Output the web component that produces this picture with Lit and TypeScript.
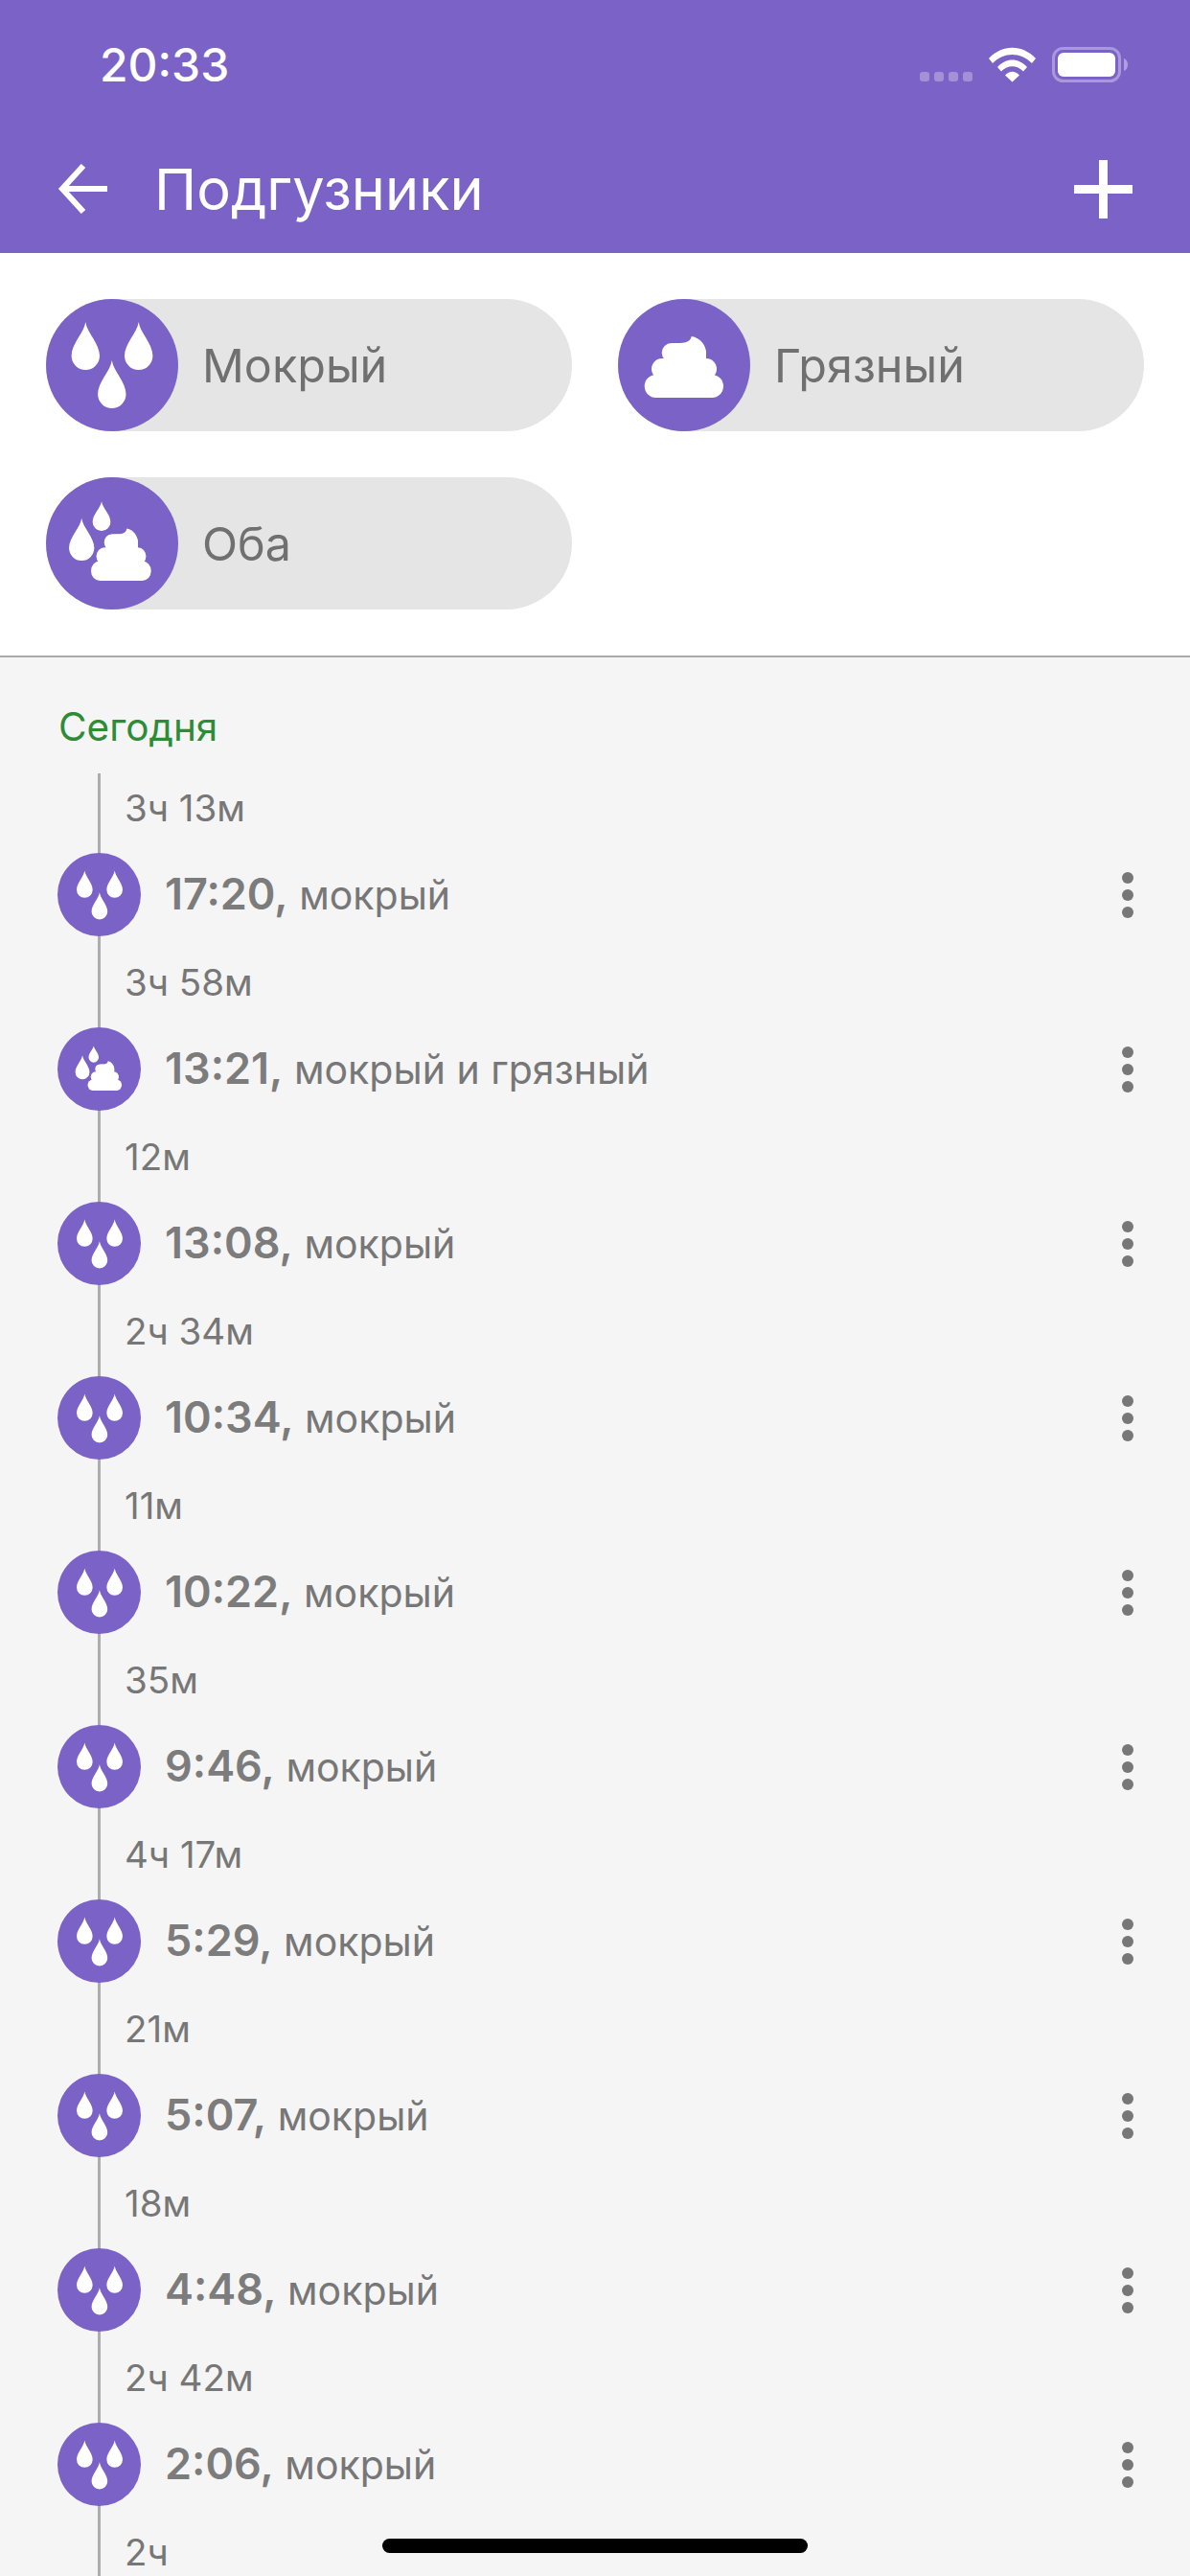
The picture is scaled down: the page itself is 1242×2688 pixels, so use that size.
import { LitElement, html, css, svg } from 'lit';
import { customElement } from 'lit/decorators.js';

type Kind = 'wet' | 'dirty' | 'both';

// teardrop: tip at (cx, tip), total size w x h
const drop = (cx: number, tip: number, w: number, h: number) => {
  const r = w / 2;
  const cy = tip + h - r;
  const d = `M${cx} ${tip}C${cx + r * 0.1} ${tip + h * 0.22} ${cx + r} ${cy - r * 0.85} ${cx + r} ${cy}` +
    `A${r} ${r} 0 0 1 ${cx - r} ${cy}C${cx - r} ${cy - r * 0.85} ${cx - r * 0.1} ${tip + h * 0.22} ${cx} ${tip}Z`;
  return svg`<path d=${d}></path>`;
};

const poop = svg`
  <rect x="27.7" y="79" width="82.3" height="24" rx="12"></rect>
  <rect x="35" y="62" width="68" height="22" rx="11"></rect>
  <rect x="45.7" y="46" width="46.3" height="20" rx="10"></rect>
  <path d="M56 46C68 46 75.500 46 76.700 39C86 40.500 92 48 92 57V64H56Z"></path>
`;

const glyphs: Record<Kind, unknown> = {
  wet: svg`${drop(41.3, 24, 29.4, 50)}${drop(96.7, 24, 29.4, 50)}${drop(68.8, 64, 29.4, 50)}`,
  dirty: poop,
  both: svg`${drop(37.200, 42.700, 26.300, 44.300)}${drop(58, 25.300, 18.700, 30.700)}
    <g transform="translate(25.900 20.450) scale(0.762 0.85)">${poop}</g>`,
};

const events: { gap: string; time: string; label: string; kind: Kind }[] = [
  { gap: '3ч 13м', time: '17:20', label: 'мокрый', kind: 'wet' },
  { gap: '3ч 58м', time: '13:21', label: 'мокрый и грязный', kind: 'both' },
  { gap: '12м', time: '13:08', label: 'мокрый', kind: 'wet' },
  { gap: '2ч 34м', time: '10:34', label: 'мокрый', kind: 'wet' },
  { gap: '11м', time: '10:22', label: 'мокрый', kind: 'wet' },
  { gap: '35м', time: '9:46', label: 'мокрый', kind: 'wet' },
  { gap: '4ч 17м', time: '5:29', label: 'мокрый', kind: 'wet' },
  { gap: '21м', time: '5:07', label: 'мокрый', kind: 'wet' },
  { gap: '18м', time: '4:48', label: 'мокрый', kind: 'wet' },
  { gap: '2ч 42м', time: '2:06', label: 'мокрый', kind: 'wet' },
];

@customElement('app-root')
export class AppRoot extends LitElement {
  static styles = css`
    :host {
      display: block;
      height: 2688px;
      overflow: hidden;
      position: relative;
      background: #f5f5f5;
      font-family: 'Inter', 'Liberation Sans', sans-serif;
    }

    .header {
      background: #7b62c6;
      color: #fff;
      height: 264px;
      box-sizing: border-box;
    }

    .status {
      height: 130px;
      display: flex;
      align-items: flex-start;
      padding: 44px 0 0 104px;
      box-sizing: border-box;
    }

    .clock {
      font-size: 48px;
      font-weight: 500;
      line-height: 48px;
      flex: 1;
    }

    .status svg {
      display: block;
      margin-right: 65px;
      margin-top: 5px;
    }

    .nav {
      height: 134px;
      display: flex;
      align-items: center;
      padding: 0 60px;
    }

    .nav h1 {
      flex: 1;
      margin: 0 0 0 49px;
      font-size: 59.500px;
      font-weight: 400;
      line-height: 70px;
    }

    .nav svg {
      display: block;
    }

    .chips {
      background: #fff;
      border-bottom: 2px solid #a9a9a9;
      padding: 48px;
      display: grid;
      grid-template-columns: 549px 549px;
      gap: 48px;
    }

    .chip {
      display: flex;
      align-items: center;
      gap: 25px;
      height: 138px;
      border-radius: 69px;
      background: #e5e5e5;
      color: #707070;
      font-size: 48.500px;
    }

    .badge {
      flex: none;
      border-radius: 50%;
      background: #7b62c6;
      display: flex;
      align-items: center;
      justify-content: center;
      position: relative;
    }

    .badge svg {
      display: block;
      fill: #fff;
    }

    .chip .badge {
      width: 138px;
      height: 138px;
    }

    .day {
      margin: 0;
      padding: 50px 0 0 61px;
      color: #2e8b37;
      font-size: 40.500px;
      font-weight: 400;
      line-height: 46px;
    }

    .timeline {
      position: relative;
      margin-top: 13px;
    }

    .timeline::before {
      content: '';
      position: absolute;
      top: 12px;
      bottom: 0;
      left: 102px;
      width: 3px;
      background: #adadad;
    }

    .gap {
      height: 95px;
      padding-left: 130px;
      display: flex;
      align-items: center;
      color: #777;
      font-size: 38.500px;
      position: relative;
    }

    .row {
      height: 87px;
      display: flex;
      align-items: center;
      padding: 0 59px 0 60px;
      color: #777;
      font-size: 41px;
      position: relative;
    }

    .row .badge {
      width: 87px;
      height: 87px;
      margin-right: 25px;
    }

    .row .text {
      flex: 1;
      padding-bottom: 3px;
    }

    .row b {
      color: #7c7c7c;
      font-size: 45px;
      font-weight: 600;
    }

    .dots {
      display: flex;
      flex-direction: column;
      gap: 6px;
    }

    .dots i {
      display: block;
      width: 12px;
      height: 12px;
      border-radius: 50%;
      background: #777;
    }

    .home {
      position: absolute;
      left: 399px;
      top: 2649px;
      width: 444px;
      height: 15px;
      border-radius: 8px;
      background: #000;
    }
  `;

  private icon(kind: Kind, size: number) {
    return html`<div class="badge">
      <svg width=${size} height=${size} viewBox="0 0 138 138">${glyphs[kind]}</svg>
    </div>`;
  }

  private statusIcons() {
    return html`<svg width="217" height="38" viewBox="960 49 217 38" fill="#fff">
      <g opacity="0.3">
        <rect x="960" y="75" width="10" height="10" rx="3"></rect>
        <rect x="975" y="75" width="10" height="10" rx="3"></rect>
        <rect x="990" y="75" width="10" height="10" rx="3"></rect>
        <rect x="1005" y="75" width="10" height="10" rx="3"></rect>
      </g>
      <path d="M1032 61C1046 46 1067 46 1081 61L1077 66C1065 54 1048 54 1036 66Z"></path>
      <path d="M1041 70C1050 60 1063 60 1072 70L1068 74.500C1061 67.500 1052 67.500 1045 74.500Z"></path>
      <path d="M1049 78.500C1054 73.500 1059 73.500 1064 78.500L1056.500 85.500Z"></path>
      <rect x="1099.500" y="50.500" width="69" height="34" rx="10" fill="none" stroke="#fff" stroke-opacity="0.35" stroke-width="3"></rect>
      <rect x="1104" y="55" width="60" height="25" rx="6"></rect>
      <path d="M1173 61C1176 62 1177 65 1177 67.500C1177 70 1176 73 1173 74Z" opacity="0.4"></path>
    </svg>`;
  }

  render() {
    return html`
      <div class="header">
        <div class="status">
          <div class="clock">20:33</div>
          ${this.statusIcons()}
        </div>
        <div class="nav">
          <svg width="52" height="52" viewBox="0 0 52 52" fill="none" stroke="#fff" stroke-width="6">
            <path d="M27 2L5 26L27 50M5 26H52"></path>
          </svg>
          <h1>Подгузники</h1>
          <svg width="61" height="61" viewBox="0 0 61 61" fill="#fff">
            <rect x="26" width="9" height="61"></rect>
            <rect y="26" width="61" height="9"></rect>
          </svg>
        </div>
      </div>

      <div class="chips">
        <div class="chip">${this.icon('wet', 138)}Мокрый</div>
        <div class="chip">${this.icon('dirty', 138)}Грязный</div>
        <div class="chip">${this.icon('both', 138)}Оба</div>
      </div>

      <h2 class="day">Сегодня</h2>
      <div class="timeline">
        ${events.map(e => html`
          <div class="gap">${e.gap}</div>
          <div class="row">
            ${this.icon(e.kind, 78)}
            <div class="text"><b>${e.time},</b> ${e.label}</div>
            <div class="dots"><i></i><i></i><i></i></div>
          </div>
        `)}
        <div class="gap">2ч</div>
      </div>
      <div class="home"></div>
    `;
  }
}
